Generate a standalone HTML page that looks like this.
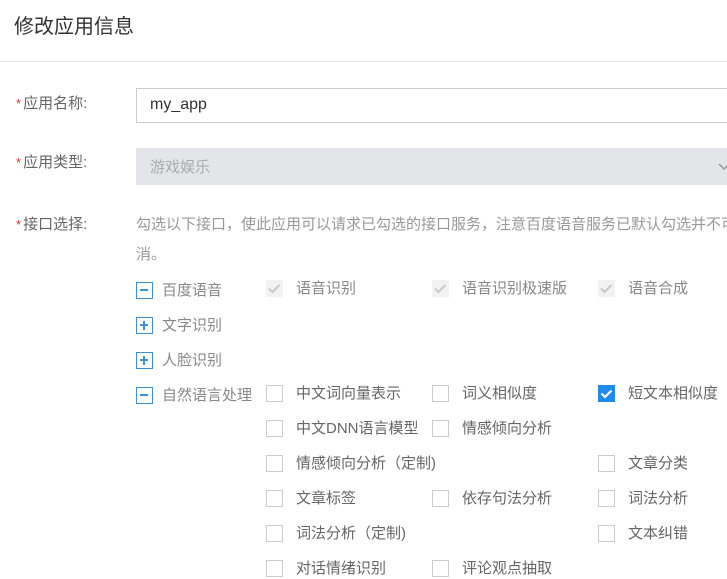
<!DOCTYPE html>
<html><head><meta charset="utf-8"><style>
body{margin:0;width:727px;height:577px;overflow:hidden;background:#fff;font-family:"Liberation Sans","Noto Sans CJK SC",sans-serif;font-size:15px;color:#666;position:relative}
.a{position:absolute;white-space:nowrap;line-height:20px}
.t{position:absolute;left:14px;top:14px;font-size:20px;color:#333;line-height:26px}
.hr{position:absolute;left:0;top:61px;width:727px;height:1px;background:#e8e8e8}
.req{color:#d9302b;font-size:13px;margin-right:2px}
.box{position:absolute;left:136px;width:620px;box-sizing:border-box}
.cb{position:absolute;width:17px;height:17px;box-sizing:border-box;border:1px solid #ccc;background:#fff}
.tg{position:absolute;left:136px;width:17px;height:17px;box-sizing:border-box;border:1.5px solid #3c8fdb}
.tg:before{content:"";position:absolute;left:2.75px;top:6.25px;width:8.5px;height:2px;background:#3c8fdb}
.tg.p:after{content:"";position:absolute;left:6px;top:3px;width:2px;height:8.5px;background:#3c8fdb}
</style></head><body>
<div class="t">修改应用信息</div>
<div class="hr"></div>
<div class="a" style="left:16px;top:94px"><span class="req">*</span>应用名称:</div>
<div class="box" style="top:88px;height:35px;border:1px solid #ccc"></div>
<div class="a" style="left:150px;top:95px;font-size:16px;color:#333">my_app</div>
<div class="a" style="left:16px;top:153px"><span class="req">*</span>应用类型:</div>
<div class="box" style="top:148px;height:37px;background:#e3e5e9"></div>
<div class="a" style="left:150px;top:158px;color:#aaa">游戏娱乐</div>
<svg style="position:absolute;left:718px;top:162px" width="12" height="10"><path d="M1 2l5 5 5-5" fill="none" stroke="#999" stroke-width="1.5"/></svg>
<div class="a" style="left:16px;top:215px"><span class="req">*</span>接口选择:</div>
<div class="a" style="left:136px;top:215px;color:#999">勾选以下接口，使此应用可以请求已勾选的接口服务，注意百度语音服务已默认勾选并不可取</div>
<div class="a" style="left:136px;top:245px;color:#999">消。</div>

<div class="tg" style="top:282px"></div><div class="a" style="left:162px;top:281px;color:#888">百度语音</div>
<div class="tg p" style="top:317px"></div><div class="a" style="left:162px;top:316px;color:#888">文字识别</div>
<div class="tg p" style="top:352px"></div><div class="a" style="left:162px;top:351px;color:#888">人脸识别</div>
<div class="tg" style="top:387px"></div><div class="a" style="left:162px;top:386px;color:#888">自然语言处理</div>

<svg style="position:absolute;left:266px;top:280px" width="17" height="17"><rect width="17" height="17" fill="#f2f2f2"/><path d="M3 8.5l3.5 3.5 7-7" fill="none" stroke="#c8c8c8" stroke-width="2"/></svg>
<div class="a" style="left:296px;top:279px;color:#888">语音识别</div>
<svg style="position:absolute;left:432px;top:280px" width="17" height="17"><rect width="17" height="17" fill="#f2f2f2"/><path d="M3 8.5l3.5 3.5 7-7" fill="none" stroke="#c8c8c8" stroke-width="2"/></svg>
<div class="a" style="left:462px;top:279px;color:#888">语音识别极速版</div>
<svg style="position:absolute;left:598px;top:280px" width="17" height="17"><rect width="17" height="17" fill="#f2f2f2"/><path d="M3 8.5l3.5 3.5 7-7" fill="none" stroke="#c8c8c8" stroke-width="2"/></svg>
<div class="a" style="left:628px;top:279px;color:#888">语音合成</div>

<div class="cb" style="left:266px;top:385px"></div><div class="a" style="left:296px;top:384px">中文词向量表示</div>
<div class="cb" style="left:432px;top:385px"></div><div class="a" style="left:462px;top:384px">词义相似度</div>
<svg style="position:absolute;left:598px;top:385px" width="17" height="17"><rect width="17" height="17" fill="#1f8ceb"/><path d="M3.5 8.5l3.5 3.5 6.5-6.5" fill="none" stroke="#fff" stroke-width="2.2"/></svg>
<div class="a" style="left:628px;top:384px">短文本相似度</div>

<div class="cb" style="left:266px;top:420px"></div><div class="a" style="left:296px;top:419px">中文DNN语言模型</div>
<div class="cb" style="left:432px;top:420px"></div><div class="a" style="left:462px;top:419px">情感倾向分析</div>

<div class="cb" style="left:266px;top:455px"></div><div class="a" style="left:296px;top:454px">情感倾向分析（定制)</div>
<div class="cb" style="left:598px;top:455px"></div><div class="a" style="left:628px;top:454px">文章分类</div>

<div class="cb" style="left:266px;top:490px"></div><div class="a" style="left:296px;top:489px">文章标签</div>
<div class="cb" style="left:432px;top:490px"></div><div class="a" style="left:462px;top:489px">依存句法分析</div>
<div class="cb" style="left:598px;top:490px"></div><div class="a" style="left:628px;top:489px">词法分析</div>

<div class="cb" style="left:266px;top:525px"></div><div class="a" style="left:296px;top:524px">词法分析（定制)</div>
<div class="cb" style="left:598px;top:525px"></div><div class="a" style="left:628px;top:524px">文本纠错</div>

<div class="cb" style="left:266px;top:560px"></div><div class="a" style="left:296px;top:559px">对话情绪识别</div>
<div class="cb" style="left:432px;top:560px"></div><div class="a" style="left:462px;top:559px">评论观点抽取</div>
</body></html>
